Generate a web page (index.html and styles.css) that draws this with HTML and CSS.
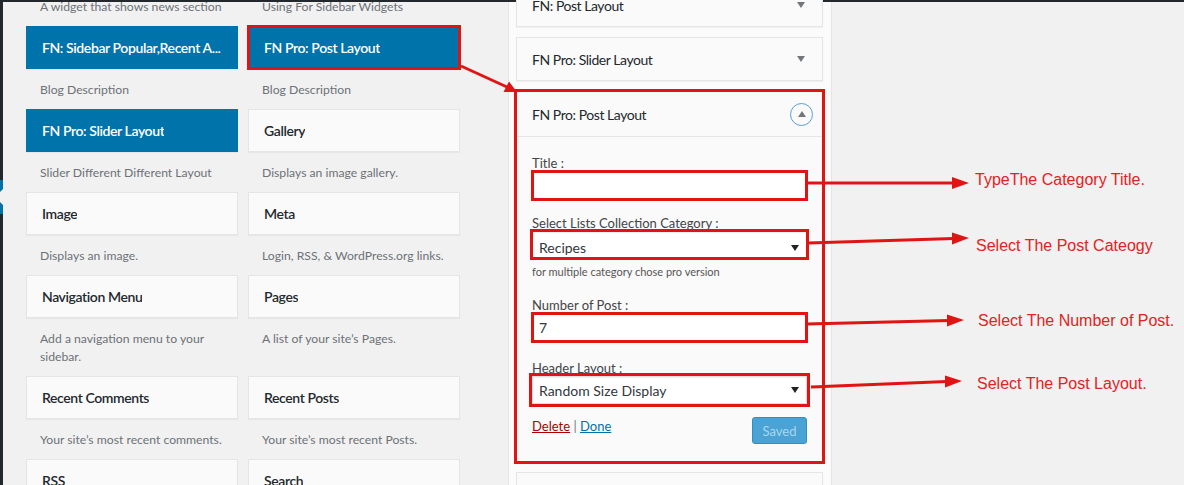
FILE: index.html
```html
<!DOCTYPE html>
<html lang="en">
<head>
<meta charset="utf-8">
<title>Widgets</title>
<link rel="stylesheet" href="styles.css">
</head>
<body>
<div class="topbar"></div>
<div class="main">
  <div class="adminmenu">
    <div class="menu-top"></div>
    <div class="menu-current"><span class="notch"></span></div>
    <div class="menu-rest"></div>
  </div>

  <div class="available">
    <div class="item lead"><p class="desc">A widget that shows news section</p></div>
    <div class="item lead"><p class="desc">Using For Sidebar Widgets</p></div>

    <div class="item"><div class="card blue"><span class="card-title">FN: Sidebar Popular,Recent A...</span></div><p class="desc">Blog Description</p></div>
    <div class="item"><div class="card blue marked"><span class="card-title">FN Pro: Post Layout</span></div><p class="desc">Blog Description</p></div>

    <div class="item"><div class="card blue"><span class="card-title">FN Pro: Slider Layout</span></div><p class="desc">Slider Different Different Layout</p></div>
    <div class="item"><div class="card"><span class="card-title">Gallery</span></div><p class="desc">Displays an image gallery.</p></div>

    <div class="item"><div class="card"><span class="card-title">Image</span></div><p class="desc">Displays an image.</p></div>
    <div class="item"><div class="card"><span class="card-title">Meta</span></div><p class="desc">Login, RSS, &amp; WordPress.org links.</p></div>

    <div class="item"><div class="card"><span class="card-title">Navigation Menu</span></div><p class="desc">Add a navigation menu to your sidebar.</p></div>
    <div class="item"><div class="card"><span class="card-title">Pages</span></div><p class="desc">A list of your site’s Pages.</p></div>

    <div class="item"><div class="card"><span class="card-title">Recent Comments</span></div><p class="desc">Your site’s most recent comments.</p></div>
    <div class="item"><div class="card"><span class="card-title">Recent Posts</span></div><p class="desc">Your site’s most recent Posts.</p></div>

    <div class="item"><div class="card"><span class="card-title">RSS</span></div><p class="desc">Entries from any RSS or Atom feed.</p></div>
    <div class="item"><div class="card"><span class="card-title">Search</span></div><p class="desc">A search form for your site.</p></div>
  </div>

  <div class="sidebar">
    <div class="wcard first">
      <div class="whead"><span class="wtitle">FN: Post Layout</span><span class="caret"></span></div>
    </div>
    <div class="wcard">
      <div class="whead"><span class="wtitle">FN Pro: Slider Layout</span><span class="caret"></span></div>
    </div>
    <div class="wcard open">
      <div class="whead"><span class="wtitle">FN Pro: Post Layout</span><span class="toggle"><span class="up"></span></span></div>
      <div class="wbody">
        <label class="flabel l-title">Title :</label>
        <input class="text box-a" type="text" value="">
        <label class="flabel l-cat">Select Lists Collection Category :</label>
        <div class="select box-b"><span>Recipes</span><span class="down"></span></div>
        <p class="hint">for multiple category chose pro version</p>
        <label class="flabel l-num">Number of Post :</label>
        <input class="text box-c" type="text" value="7">
        <label class="flabel l-head">Header Layout :</label>
        <div class="select box-d"><span>Random Size Display</span><span class="down"></span></div>
        <div class="actions">
          <div class="links"><a class="del" href="#">Delete</a> <span class="sep">|</span> <a class="done" href="#">Done</a></div>
          <button class="saved" type="button">Saved</button>
        </div>
      </div>
    </div>
    <div class="wcard">
      <div class="whead"><span class="wtitle"></span></div>
    </div>
  </div>

  <div class="notes">
    <p class="note n1">TypeThe Category Title.</p>
    <p class="note n2">Select The Post Cateogy</p>
    <p class="note n3">Select The Number of Post.</p>
    <p class="note n4">Select The Post Layout.</p>
  </div>
</div>

<svg class="arrows" width="1184" height="485" viewBox="0 0 1184 485">
  <g stroke="#e11414" stroke-width="3" fill="none">
    <line x1="461" y1="66" x2="507" y2="87"/>
    <line x1="808" y1="183" x2="954" y2="183"/>
    <line x1="808" y1="243" x2="954" y2="238.5"/>
    <line x1="807" y1="324" x2="949" y2="320.5"/>
    <line x1="811" y1="387" x2="947" y2="381.5"/>
  </g>
  <g fill="#e11414">
    <polygon points="517,92 503.5,92 509,81.5"/>
    <polygon points="969,183 952,177 952,189"/>
    <polygon points="969,238 952,232.5 952,244.5"/>
    <polygon points="964,320 947,314.5 947,326.5"/>
    <polygon points="962,381 945,375.5 945,387.5"/>
  </g>
</svg>
</body>
</html>
```

FILE: styles.css
```css
* { box-sizing: border-box; }

html, body {
  margin: 0;
  padding: 0;
  width: 1184px;
  height: 485px;
  overflow: hidden;
  background: #f1f1f1;
  font-family: Lato, "Open Sans", sans-serif;
  color: #23282d;
}

.topbar {
  height: 2px;
  background: #23282d;
}

.main {
  display: flex;
  height: 483px;
}

/* admin menu edge */
.adminmenu {
  width: 3px;
  flex-shrink: 0;
  display: flex;
  flex-direction: column;
  overflow: hidden;
}
.menu-top { height: 178px; background: #23282d; }
.menu-current {
  height: 34px;
  background: #0073aa;
  display: flex;
  align-items: center;
  justify-content: flex-end;
}
.notch {
  flex-shrink: 0;
  width: 0;
  height: 0;
  border-top: 8px solid transparent;
  border-bottom: 8px solid transparent;
  border-right: 8px solid #f1f1f1;
}
.menu-rest { flex: 1; background: #23282d; }

/* available widgets */
.available {
  margin-left: 23px;
  width: 434px;
  flex-shrink: 0;
  display: grid;
  grid-template-columns: 212px 212px;
  column-gap: 10px;
  align-content: start;
  align-items: start;
  margin-top: -16px;
}

.card {
  height: 43px;
  background: #fafafa;
  border: 1px solid #e5e5e5;
  box-shadow: 0 1px 1px rgba(0,0,0,.04);
  padding: 0 15px;
  display: flex;
  align-items: center;
  overflow: hidden;
}
.card-title {
  font-size: 14px;
  font-weight: 600;
  letter-spacing: -0.4px;
  white-space: nowrap;
  overflow: hidden;
  color: #23282d;
}
.card.blue {
  background: #0073aa;
  border-color: #0073aa;
}
.card.blue .card-title { color: #fff; }
.card.marked {
  outline: 3px solid #e11414;
  outline-offset: -2px;
}

.desc {
  margin: 0;
  padding: 12px 12px 10px 14px;
  font-size: 12.2px;
  line-height: 18px;
  color: #6d7277;
}

/* sidebar */
.sidebar {
  margin-left: 48px;
  width: 324px;
  flex-shrink: 0;
  background: #fbfbfb;
  border-left: 1px solid #e5e5e5;
  border-right: 1px solid #e5e5e5;
  padding: 0 8px 0 7px;
  display: flex;
  flex-direction: column;
  gap: 10px;
}
.wcard {
  width: 307px;
  flex-shrink: 0;
  background: #fafafa;
  border: 1px solid #e5e5e5;
  box-shadow: 0 1px 1px rgba(0,0,0,.04);
}
.wcard.first { margin-top: -19px; }
.whead {
  height: 42px;
  padding: 0 17px 0 15px;
  display: flex;
  align-items: center;
  justify-content: space-between;
}
.wtitle {
  font-size: 14px;
  letter-spacing: -0.45px;
  color: #23282d;
}
.caret {
  width: 0;
  height: 0;
  border-left: 4.5px solid transparent;
  border-right: 4.5px solid transparent;
  border-top: 6px solid #72777c;
}
.wcard.open {
  outline: 3px solid #e11414;
  outline-offset: -1px;
}
.wcard.open .whead {
  height: 44px;
  padding-right: 9px;
}
.toggle {
  width: 23px;
  height: 23px;
  border-radius: 50%;
  border: 1.5px solid #5b9dd9;
  display: flex;
  align-items: center;
  justify-content: center;
}
.up {
  width: 0;
  height: 0;
  margin-top: -1px;
  border-left: 4.5px solid transparent;
  border-right: 4.5px solid transparent;
  border-bottom: 6px solid #72777c;
}

.wbody {
  border-top: 1px solid #e5e5e5;
  padding: 0 15px 17px;
  display: flex;
  flex-direction: column;
}
.flabel {
  font-size: 13px;
  line-height: 15px;
  color: #444;
}
.l-title { margin-top: 19px; }
.l-cat { margin-top: 16px; }
.l-num { margin-top: 19px; }
.l-head { margin-top: 19px; }

.text, .select {
  width: 100%;
  height: 29px;
  margin: 0;
  border: 1px solid #ddd;
  border-radius: 0;
  box-shadow: inset 0 1px 2px rgba(0,0,0,.07);
  background: #fff;
  font-family: Lato, "Open Sans", sans-serif;
  font-size: 14px;
  color: #32373c;
  padding: 0 6px;
}
.select {
  height: 28px;
  display: flex;
  align-items: center;
  justify-content: space-between;
  padding: 0 7px 0 6px;
}
.down {
  width: 0;
  height: 0;
  border-left: 4px solid transparent;
  border-right: 4px solid transparent;
  border-top: 6px solid #222;
}
.box-a { outline: 3px solid #e11414; outline-offset: -2px; }
.box-b {
  height: 27px;
  padding-top: 6px;
  outline: 3px solid #e11414;
  outline-offset: -1px;
}
.box-c { outline: 3px solid #e11414; outline-offset: -2px; }
.box-d { outline: 3px solid #e11414; outline-offset: 0; }

.hint {
  margin: 7px 0 0;
  font-size: 11px;
  line-height: 14px;
  color: #555;
}

.actions {
  margin-top: 13px;
  display: flex;
  justify-content: space-between;
  align-items: flex-start;
}
.links {
  font-size: 13px;
  line-height: 18px;
  color: #72777c;
}
.del { color: #a00; }
.done { color: #0073aa; }
.saved {
  width: 55px;
  height: 27px;
  border: 1px solid #2e8fc4;
  border-radius: 3px;
  background: #4aa3d4;
  color: #a9d6ee;
  font-family: Lato, "Open Sans", sans-serif;
  font-size: 13px;
  padding: 0;
}

/* annotations */
.notes {
  margin-left: 143px;
  display: flex;
  flex-direction: column;
}
.note {
  margin: 0;
  font-family: "Liberation Sans", Arial, sans-serif;
  font-size: 16px;
  line-height: 20px;
  color: #e32222;
  white-space: nowrap;
}
.n1 { margin-top: 168px; }
.n2 { margin-top: 46px; margin-left: 1px; }
.n3 { margin-top: 55px; margin-left: 3px; }
.n4 { margin-top: 43px; margin-left: 2px; }

.arrows {
  position: absolute;
  top: 0;
  left: 0;
  pointer-events: none;
}
```
